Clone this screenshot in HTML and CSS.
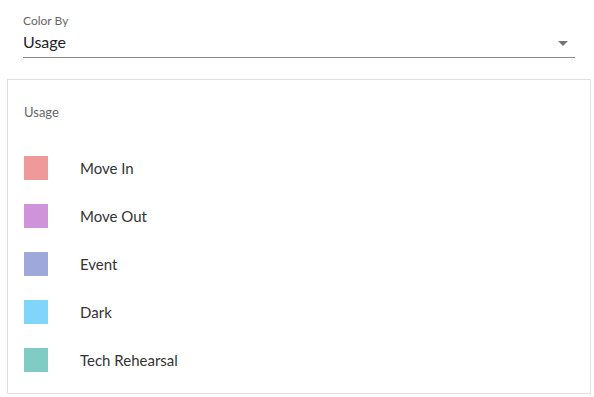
FILE: index.html
```html
<!DOCTYPE html>
<html lang="en">
<head>
    <meta charset="UTF-8">
    <meta name="viewport" content="width=device-width, initial-scale=1.0">
    <title>Color By</title>
    <link rel="stylesheet" href="styles.css">
</head>
<body>
    <div class="field">
        <label class="field-label">Color By</label>
        <div class="select">
            <span class="select-value">Usage</span>
            <span class="select-arrow"></span>
        </div>
    </div>

    <div class="legend">
        <div class="legend-title">Usage</div>
        <div class="legend-row">
            <span class="swatch move-in"></span>
            <span class="legend-label">Move In</span>
        </div>
        <div class="legend-row">
            <span class="swatch move-out"></span>
            <span class="legend-label">Move Out</span>
        </div>
        <div class="legend-row">
            <span class="swatch event"></span>
            <span class="legend-label">Event</span>
        </div>
        <div class="legend-row">
            <span class="swatch dark"></span>
            <span class="legend-label">Dark</span>
        </div>
        <div class="legend-row">
            <span class="swatch tech"></span>
            <span class="legend-label">Tech Rehearsal</span>
        </div>
    </div>
</body>
</html>
```

FILE: styles.css
```css
body {
    font-family: 'Lato', 'Open Sans', sans-serif;
    margin: 0;
    background: #fff;
    color: #333;
}
.field {
    margin: 0 19px 0 23px;
    padding-top: 13px;
}
.field-label {
    display: block;
    font-size: 12px;
    line-height: 16px;
    color: #666;
}
.select {
    display: flex;
    align-items: center;
    justify-content: space-between;
    height: 28px;
    border-bottom: 1px solid #8a8a8a;
}
.select-value {
    font-size: 16px;
    color: #222;
    padding-bottom: 3px;
}
.select-arrow {
    width: 0;
    height: 0;
    border-left: 5px solid transparent;
    border-right: 5px solid transparent;
    border-top: 5px solid #757575;
    margin-right: 7px;
}
.legend {
    margin: 21px 3px 0 7px;
    border: 1px solid #e0e0e0;
    padding: 22px 16px 9px 16px;
}
.legend-title {
    font-size: 13px;
    line-height: 20px;
    color: #666;
    margin-bottom: 22px;
}
.legend-row {
    display: flex;
    align-items: center;
    height: 48px;
}
.swatch {
    width: 24px;
    height: 24px;
    margin-right: 32px;
}
.legend-label {
    font-size: 15px;
    color: #333;
}
.move-in { background: #ef9a9a; }
.move-out { background: #ce93d8; }
.event { background: #9fa8da; }
.dark { background: #81d4fa; }
.tech { background: #80cbc4; }
```
